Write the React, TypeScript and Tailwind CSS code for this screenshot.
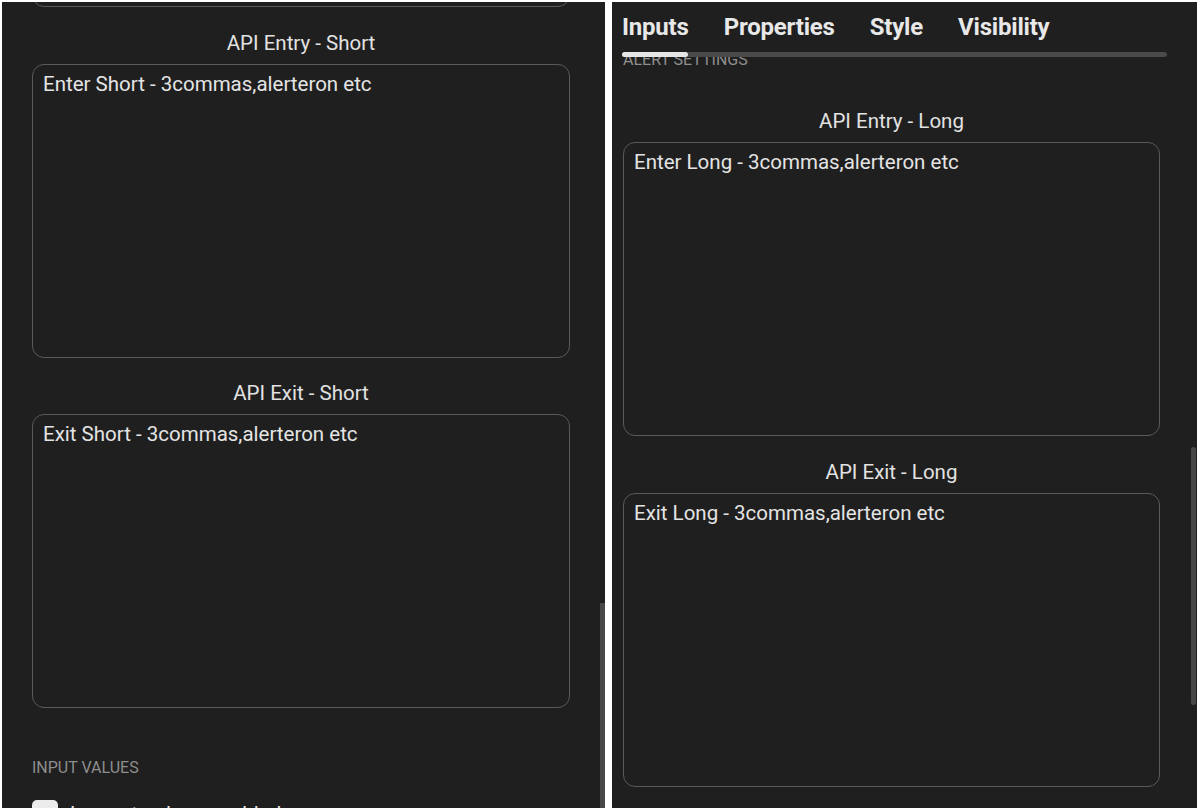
import React from "react";

const FONT = { fontFamily: "Roboto, 'Noto Sans', Arial, sans-serif" };

// One labelled text box, as in the alert settings panel
function ApiField({ label, value }: { label: string; value: string }) {
  return (
    <div className="flex flex-col">
      <div className="text-center text-[20.5px] leading-[28px] text-[#e2e2e2] mb-[7px]">{label}</div>
      <div className="h-[294px] rounded-[12px] border border-[#5a5a5a] px-[10px] pt-[5px] text-[20.5px] leading-[28px] text-[#e4e4e4]">
        {value}
      </div>
    </div>
  );
}

function LeftPanel() {
  return (
    <div className="relative w-[603px] h-full bg-[#1f1f1f] overflow-hidden">
      <div className="pl-[30px] pr-[35px] flex flex-col">
        {/* bottom of a box scrolled away above */}
        <div className="h-[100px] -mt-[95px] rounded-[12px] border border-[#5a5a5a]" />
        <div className="mt-[22px]">
          <ApiField label="API Entry - Short" value="Enter Short - 3commas,alerteron etc" />
        </div>
        <div className="mt-[21px]">
          <ApiField label="API Exit - Short" value="Exit Short - 3commas,alerteron etc" />
        </div>
        <div className="mt-[48px] text-[16px] leading-[24px] text-[#8e8e8e]">INPUT VALUES</div>
        <div className="mt-[20px] flex items-start gap-[12px]">
          <div className="w-[26px] h-[26px] rounded-[5px] bg-[#ececec]" />
          <div className="text-[20.5px] leading-[28px] text-[#e4e4e4]">Long stop loss enabled</div>
        </div>
      </div>
      <div className="absolute right-0 top-[601px] w-[5px] h-[210px] bg-[#474747]" />
    </div>
  );
}

function RightPanel() {
  const tabs = ["Inputs", "Properties", "Style", "Visibility"];
  return (
    <div className="relative flex-1 h-full bg-[#1f1f1f] overflow-hidden flex flex-col">
      <div className="pl-[10px] pr-[30px]">
        <div className="flex gap-[35px] pt-[11px] text-[24px] leading-[28px] font-bold tracking-[-0.2px] text-[#e8e8e8]">
          {tabs.map((t) => (
            <span key={t}>{t}</span>
          ))}
        </div>
        <div className="mt-[11px] h-[5px] rounded-full bg-[#4a4a4a] flex">
          <div className="w-[66px] h-full rounded-full bg-[#e6e6e6]" />
        </div>
      </div>
      <div className="flex-1 overflow-hidden pl-[11px] pr-[37px]">
        <div className="-mt-[9px] text-[16px] leading-[24px] text-[#8e8e8e]">ALERT SETTINGS</div>
        <div className="mt-[35px]">
          <ApiField label="API Entry - Long" value="Enter Long - 3commas,alerteron etc" />
        </div>
        <div className="mt-[22px]">
          <ApiField label="API Exit - Long" value="Exit Long - 3commas,alerteron etc" />
        </div>
      </div>
      <div className="absolute right-[1px] top-[445px] w-[5px] h-[258px] rounded-full bg-[#474747]" />
    </div>
  );
}

export default function App() {
  return (
    <div style={FONT} className="w-[1200px] h-[812px] bg-white flex gap-[7px] pt-[2px] pl-[2px] pr-[3px] pb-[4px]">
      <LeftPanel />
      <RightPanel />
    </div>
  );
}
